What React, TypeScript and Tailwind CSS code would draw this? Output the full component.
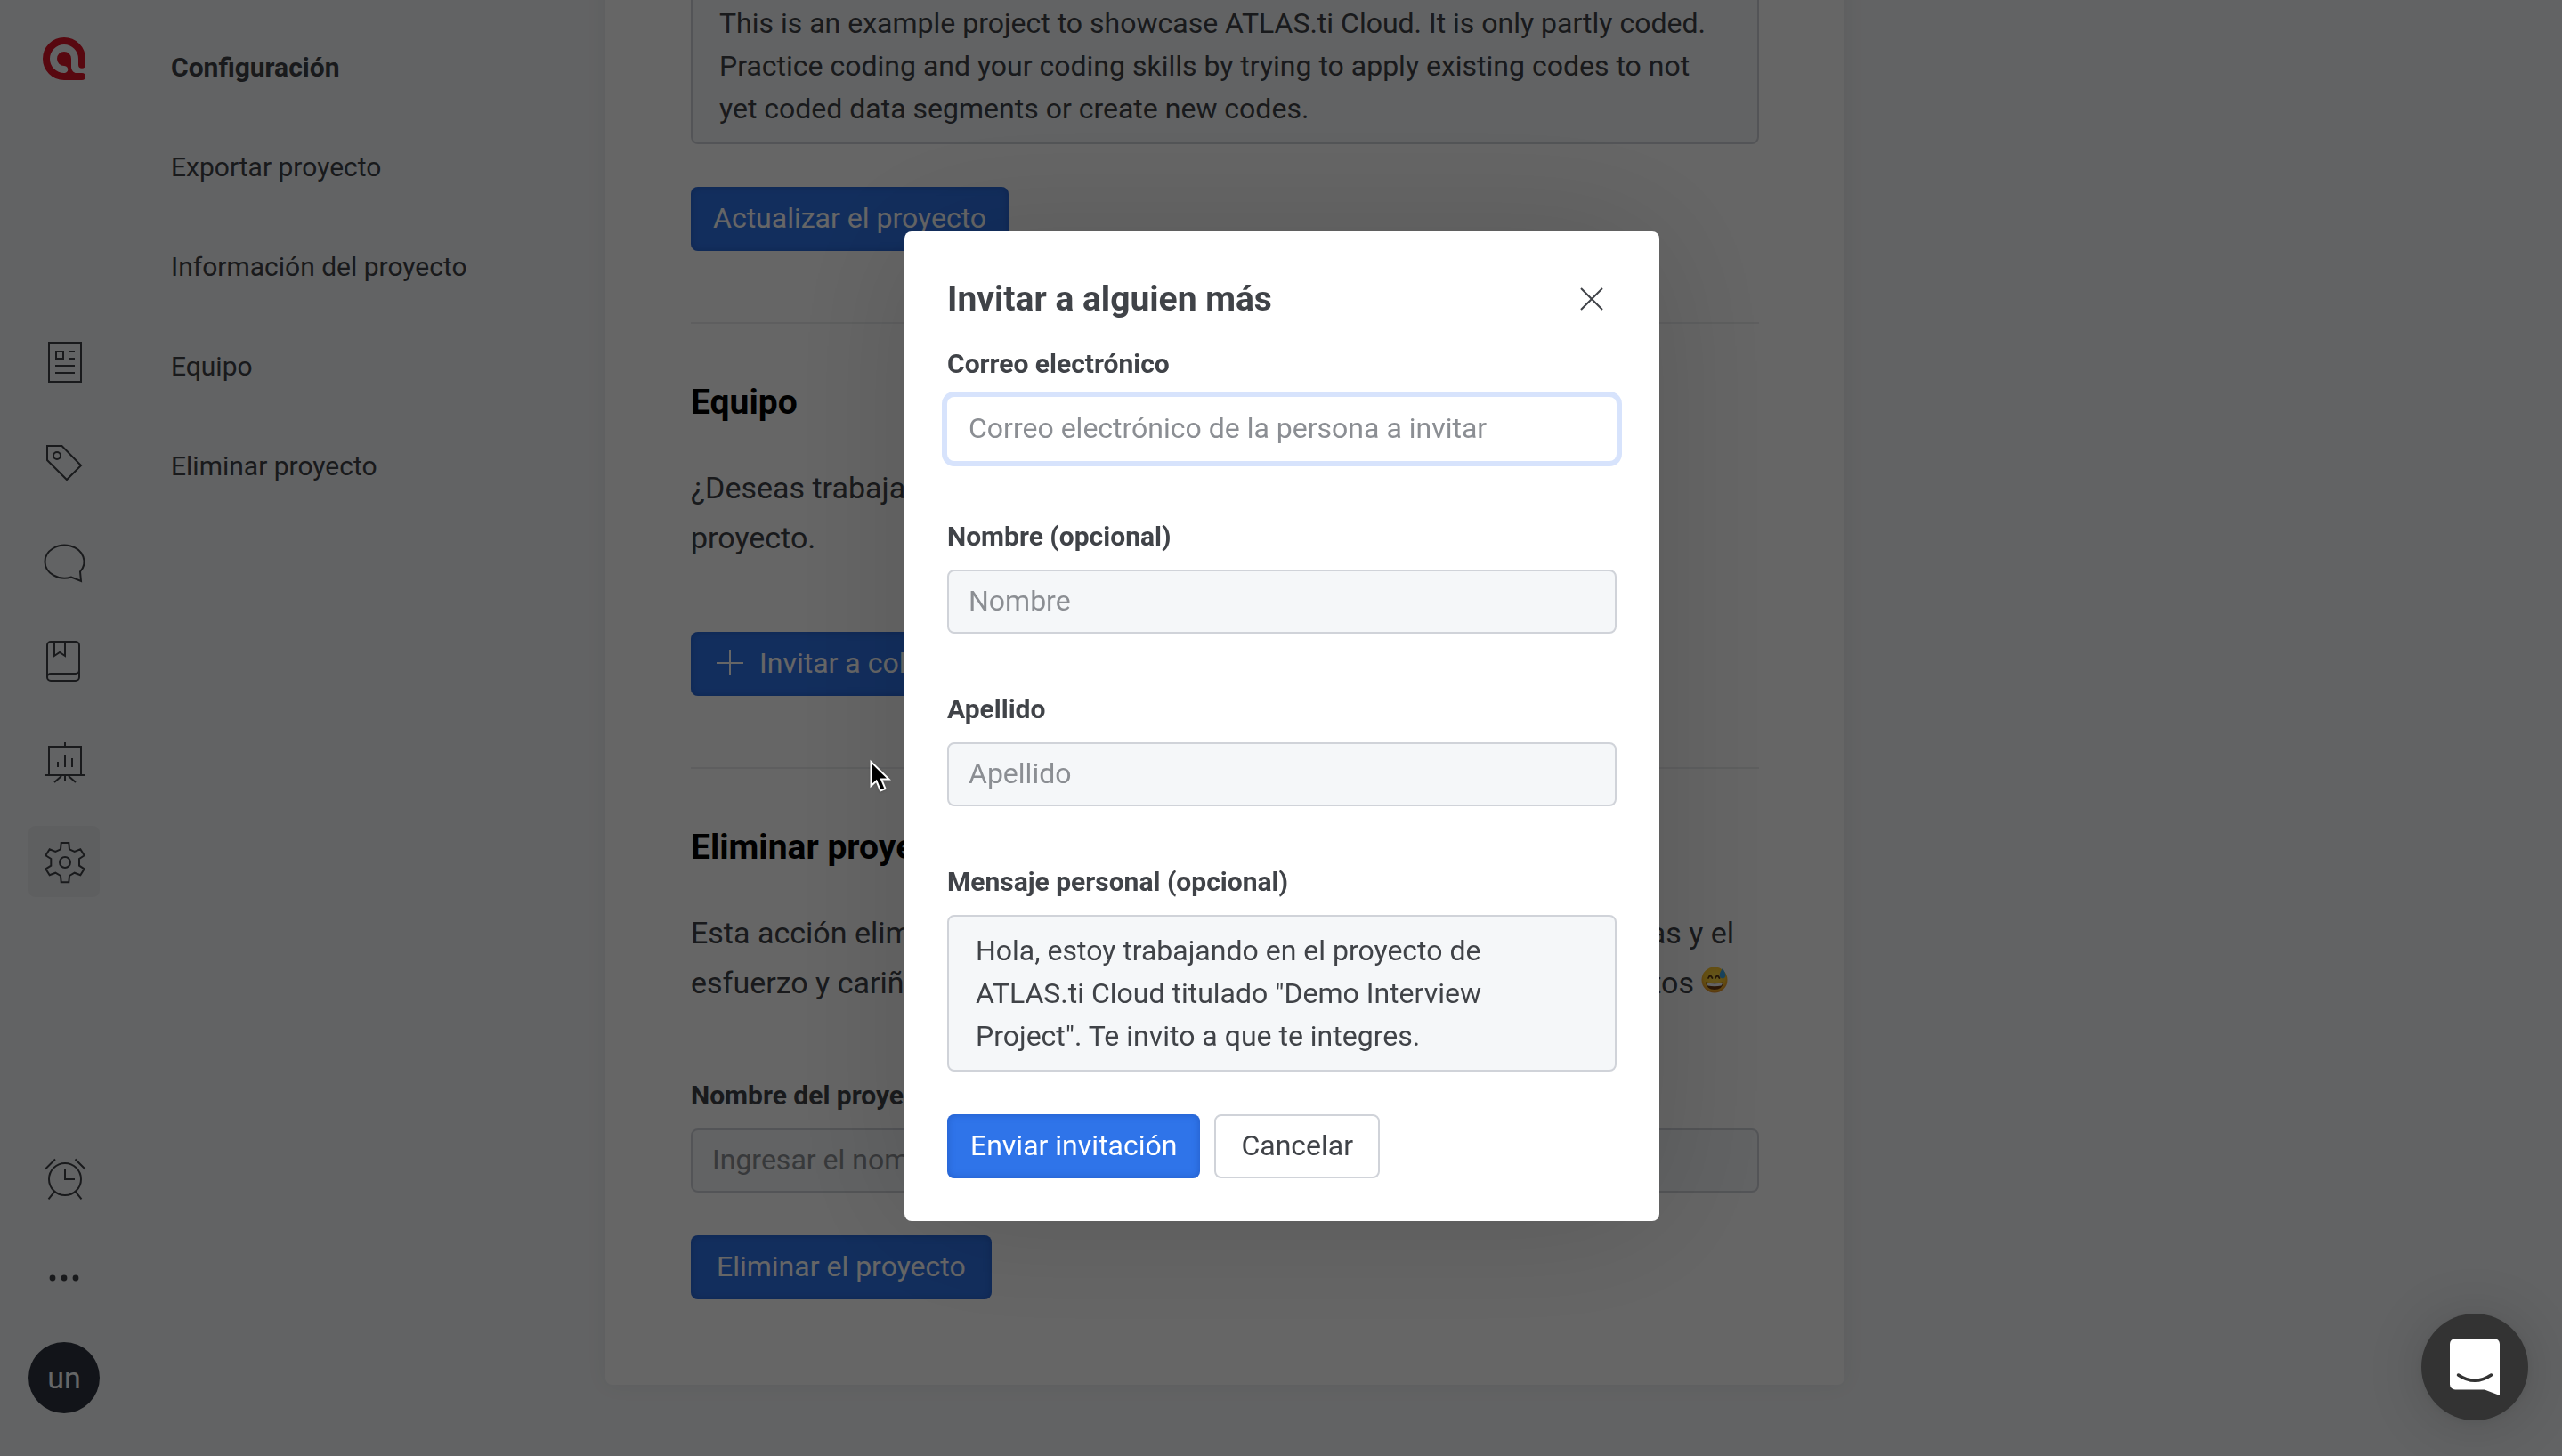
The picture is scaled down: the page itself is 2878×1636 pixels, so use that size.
import React from 'react'

const icon = 'h-12 w-12 overflow-visible fill-none stroke-[#404348] stroke-2'
const input =
  'block h-[72px] w-full rounded-lg border-2 border-[#d0d3d9] bg-[#f5f7f9] px-[22px] pb-[2px] text-[32px] text-[#404348] placeholder-[#8b8e93] outline-none'
const area =
  'block w-full resize-none overflow-hidden rounded-lg border-2 border-[#d0d3d9] bg-[#f5f7f9] py-[14px] pr-10 pl-[30px] text-[32px] leading-[48px] text-[#404348] outline-none'
const label = 'mb-4 block text-[30px] leading-[42px] font-bold text-[#404348]'
const primary =
  'flex h-[72px] items-center rounded-lg bg-[#2f74e9] px-[25px] pb-[2px] text-[32px] text-white shadow-[inset_0_0_8px_rgba(20,60,150,0.4)]'

const Logo = () => (
  <svg viewBox="0 0 52 52" className="h-[52px] w-[52px]">
    <path d="M46 32.700V26a20 20 0 1 0-20 20h20" fill="none" stroke="#dc1528" strokeWidth="8" strokeLinecap="round" />
    <path
      fill="#dc1528"
      d="M18 26a8 8 0 1 1 16 0v9c0 4.500 3 7.500 8 7.500V44H25v-1.500c4-.5 6-2.800 5-5.800-.6-1.900-2-2.500-4-2.700a8 8 0 0 1-8-8z"
    />
  </svg>
)

const DocumentIcon = () => (
  <svg viewBox="0 0 48 48" className={icon}>
    <path d="M7 1h36v44H7zM15 11h8v8h-8zM30 11h6M30 19h6M14 27h22M14 35h22" />
  </svg>
)

const TagIcon = () => (
  <svg viewBox="0 0 48 48" className={icon}>
    <path d="M5 5h16.500L43 27 27 43 5 21z" />
    <circle cx="16" cy="16" r="4" />
  </svg>
)

const CommentIcon = () => (
  <svg viewBox="0 0 48 48" className={icon}>
    <path d="M42 34.300A22 18.500 0 1 0 32 40.500L43 45z" />
  </svg>
)

const BookIcon = () => (
  <svg viewBox="0 0 48 48" className={icon}>
    <rect x="5" y="1" width="36" height="44" rx="4" />
    <path d="M13 1v16l6-4 6 4V1M5 41a4 4 0 0 1 4-4h28a4 4 0 0 0 4-4" />
  </svg>
)

const BoardIcon = () => (
  <svg viewBox="0 0 48 48" className={icon}>
    <path d="M25 2v5M7 39V7h36v32M2 39h46M17 24v6M25 16v14M33 20v10M21 40l-8 7M25 40v6M29 40l8 7" />
  </svg>
)

const GearIcon = () => (
  <svg viewBox="0 0 48 48" className={icon}>
    <path d="M20.700 3h8.600l.7 7.300 5.700 2.700 6.600-2.700 4.400 7L41 21v7.700l5.700 3.600-4.400 7-6.600-2.600L30 40l-.7 7.300h-8.600L20 40l-5.700-3.300-6.600 2.600-4.400-7 6-3.600V21l-6-3.700 4.400-7 6.600 2.700 5.700-2.700z" />
    <circle cx="25" cy="25" r="6" />
  </svg>
)

const AlarmIcon = () => (
  <svg viewBox="0 0 48 48" className={icon}>
    <circle cx="25" cy="25" r="18" />
    <path d="M25 14v11h11M3 13.500 14 2.500M36.500 2.500l11 11M13.500 38.700l-7 8.600M36.500 38.700l7 8.600" />
  </svg>
)

const DotsIcon = () => (
  <svg viewBox="0 0 48 48" className="h-12 w-12 fill-[#404348]">
    <circle cx="11" cy="24" r="3.400" />
    <circle cx="24" cy="24" r="3.400" />
    <circle cx="37" cy="24" r="3.400" />
  </svg>
)

const SweatSmile = () => (
  <svg viewBox="0 0 30 30" className="inline-block h-[30px] w-[30px] align-baseline">
    <defs>
      <radialGradient id="face" cx="50%" cy="40%" r="60%">
        <stop offset="0" stopColor="#ffe04a" />
        <stop offset="0.7" stopColor="#fdc52c" />
        <stop offset="1" stopColor="#e8912a" />
      </radialGradient>
    </defs>
    <circle cx="15" cy="15" r="14.500" fill="url(#face)" />
    <path d="M8 13q2-5 4.500 0M16 13q2-5 4.500 0" fill="none" stroke="#5a3510" strokeWidth="1.800" strokeLinecap="round" />
    <path d="M5 17.500q10 2 20 0-1 8.500-10 8.500T5 17.500z" fill="#6b3a10" />
    <path d="M6 18.300q9 1.700 18 0-.3 2.700-1.500 3.200-7.500 1.300-15 0Q6.300 21 6 18.300z" fill="#fff" />
    <path d="M24 2q-4 6-3.300 8.500a3.400 3.400 0 0 0 6.700 0Q28 8 24 2z" fill="#3fa9e8" />
  </svg>
)

const tools = [
  { name: 'Documentos', Icon: DocumentIcon },
  { name: 'Códigos', Icon: TagIcon },
  { name: 'Comentarios', Icon: CommentIcon },
  { name: 'Libro de códigos', Icon: BookIcon },
  { name: 'Informes', Icon: BoardIcon },
  { name: 'Configuración', Icon: GearIcon, active: true },
]

const links = ['Exportar proyecto', 'Información del proyecto', 'Equipo', 'Eliminar proyecto']

function Rail() {
  return (
    <aside className="flex w-36 shrink-0 flex-col items-center justify-between pt-10 pb-12">
      <a href="#" aria-label="ATLAS.ti">
        <Logo />
      </a>
      <div className="flex flex-col gap-8">
        {tools.map(({ name, Icon, active }) => (
          <button
            key={name}
            aria-label={name}
            className={`flex h-20 w-20 items-center justify-center rounded-lg ${active ? 'bg-[#ebedef]' : ''}`}
          >
            <Icon />
          </button>
        ))}
      </div>
      <div className="flex flex-col gap-8">
        <button aria-label="Recordatorios" className="flex h-20 w-20 items-center justify-center">
          <AlarmIcon />
        </button>
        <button aria-label="Más" className="flex h-20 w-20 items-center justify-center">
          <DotsIcon />
        </button>
        <button className="flex h-20 w-20 items-center justify-center rounded-full bg-[#2d343f] text-[34px] text-white">un</button>
      </div>
    </aside>
  )
}

function SettingsNav() {
  return (
    <nav className="flex w-[536px] shrink-0 flex-col px-12 pt-[19px] text-[30px] text-[#404348]">
      <h1 className="flex h-28 items-center font-bold">Configuración</h1>
      {links.map((l) => (
        <a key={l} href="#" className="flex h-28 items-center">
          {l}
        </a>
      ))}
    </nav>
  )
}

function ProjectSettings() {
  return (
    <div className="w-full max-w-[1392px] shrink-0 rounded-lg bg-white px-24 pt-20 pb-24 shadow-[0_0_24px_rgba(0,0,0,0.06)]">
      <textarea
        rows={3}
        aria-label="Descripción"
        className={area}
        defaultValue="This is an example project to showcase ATLAS.ti Cloud. It is only partly coded. Practice coding and your coding skills by trying to apply existing codes to not yet coded data segments or create new codes."
      />
      <button className={`mt-12 ${primary}`}>Actualizar el proyecto</button>

      <section className="mt-20 border-t-2 border-[#ebecee] pt-[60px] pb-20">
        <h2 className="mb-10 text-[39px] leading-[56px] font-bold text-black">Equipo</h2>
        <p className="mb-[78px] text-[34px] leading-[56px] text-[#404348]">
          ¿Deseas trabajar en equipo? Invita a alguien a participar en tu
          <br />
          proyecto.
        </p>
        <button className={primary}>
          <svg viewBox="0 0 30 30" className="mr-[18px] ml-1 h-[30px] w-[30px] stroke-white stroke-2">
            <path d="M15 0v29M0 15h30" />
          </svg>
          Invitar a colaboradores
        </button>
      </section>

      <section className="border-t-2 border-[#ebecee] pt-[60px]">
        <h2 className="mb-10 text-[39px] leading-[56px] font-bold text-black">Eliminar proyecto</h2>
        <p className="mb-[78px] text-[34px] leading-[56px] text-[#404348]">
          Esta acción eliminará de forma permanente los contenidos, códigos, citas y el
          <br />
          esfuerzo y cariño que pusiste en ellos. Ya no se podrán recuperar los datos <SweatSmile />
        </p>
        <label htmlFor="project" className={label}>
          Nombre del proyecto
        </label>
        <input id="project" placeholder="Ingresar el nombre del proyecto" className={input} />
        <button className={`mt-12 ${primary}`}>
          <span className="px-1">Eliminar el proyecto</span>
        </button>
      </section>
    </div>
  )
}

function InviteDialog() {
  return (
    <div className="fixed inset-0 z-10 flex items-center justify-center bg-black/60 pb-1 pl-[2px]">
      <form
        role="dialog"
        aria-labelledby="invite-title"
        className="w-[848px] max-w-full rounded-lg bg-white p-12 shadow-[0_0_160px_rgba(0,0,0,0.15)]"
      >
        <header className="mb-6 flex h-14 items-center justify-between pr-4">
          <h2 id="invite-title" className="text-[39px] font-bold text-[#404348]">
            Invitar a alguien más
          </h2>
          <button type="button" aria-label="Cerrar">
            <svg viewBox="0 0 24 24" className="h-6 w-6 overflow-visible stroke-[#404348] stroke-2">
              <path d="M0 0l24 24M24 0L0 24" />
            </svg>
          </button>
        </header>

        <label htmlFor="email" className={label}>
          Correo electrónico
        </label>
        <input
          id="email"
          type="email"
          placeholder="Correo electrónico de la persona a invitar"
          className="mb-16 block h-[72px] w-full rounded-lg bg-white px-6 pb-[2px] text-[32px] text-[#404348] placeholder-[#8b8e93] ring-6 ring-[#d7e3fc] outline-none"
        />

        <label htmlFor="name" className={label}>
          Nombre (opcional)
        </label>
        <input id="name" placeholder="Nombre" className={`mb-16 ${input}`} />

        <label htmlFor="surname" className={label}>
          Apellido
        </label>
        <input id="surname" placeholder="Apellido" className={`mb-16 ${input}`} />

        <label htmlFor="message" className={label}>
          Mensaje personal (opcional)
        </label>
        <textarea
          id="message"
          rows={3}
          className={area}
          defaultValue={'Hola, estoy trabajando en el proyecto de ATLAS.ti Cloud titulado "Demo Interview Project". Te invito a que te integres.'}
        />

        <div className="mt-12 flex gap-4">
          <button type="submit" className={primary}>
            <span className="px-px">Enviar invitación</span>
          </button>
          <button type="button" className="h-[72px] rounded-lg border-2 border-[#d0d3d9] bg-white px-7 pb-[2px] text-[32px] text-[#404348]">
            Cancelar
          </button>
        </div>
      </form>
    </div>
  )
}

function ChatLauncher() {
  return (
    <button
      aria-label="Chat"
      className="fixed right-[38px] bottom-10 z-20 flex h-[120px] w-[120px] items-center justify-center rounded-full bg-[#333333] shadow-[0_2px_12px_rgba(0,0,0,0.06),0_4px_64px_rgba(0,0,0,0.16)]"
    >
      <svg viewBox="0 0 56 64" className="h-16 w-14">
        <path d="M6 0h44a6 6 0 0 1 6 6v58l-17-6.500H6a6 6 0 0 1-6-6V6a6 6 0 0 1 6-6z" fill="#fff" />
        <path d="M9.500 41q18.500 12.500 37 0" fill="none" stroke="#333333" strokeWidth="3.500" strokeLinecap="round" />
      </svg>
    </button>
  )
}

export default function App() {
  return (
    <div className="flex h-screen overflow-hidden bg-[#f5f7f9] font-[Roboto,sans-serif]">
      <Rail />
      <SettingsNav />
      <main className="flex flex-1 flex-col justify-end pb-20">
        <ProjectSettings />
      </main>
      <InviteDialog />
      <ChatLauncher />
      <svg viewBox="0 0 24 36" className="fixed top-[854px] left-[977px] z-30 h-9 w-6 overflow-visible drop-shadow">
        <path d="M1.500 2v27l6-5.500 4.500 11 5.500-2.300-4.500-10.700h8.500z" fill="#000" stroke="#fff" strokeWidth="2" />
      </svg>
    </div>
  )
}
